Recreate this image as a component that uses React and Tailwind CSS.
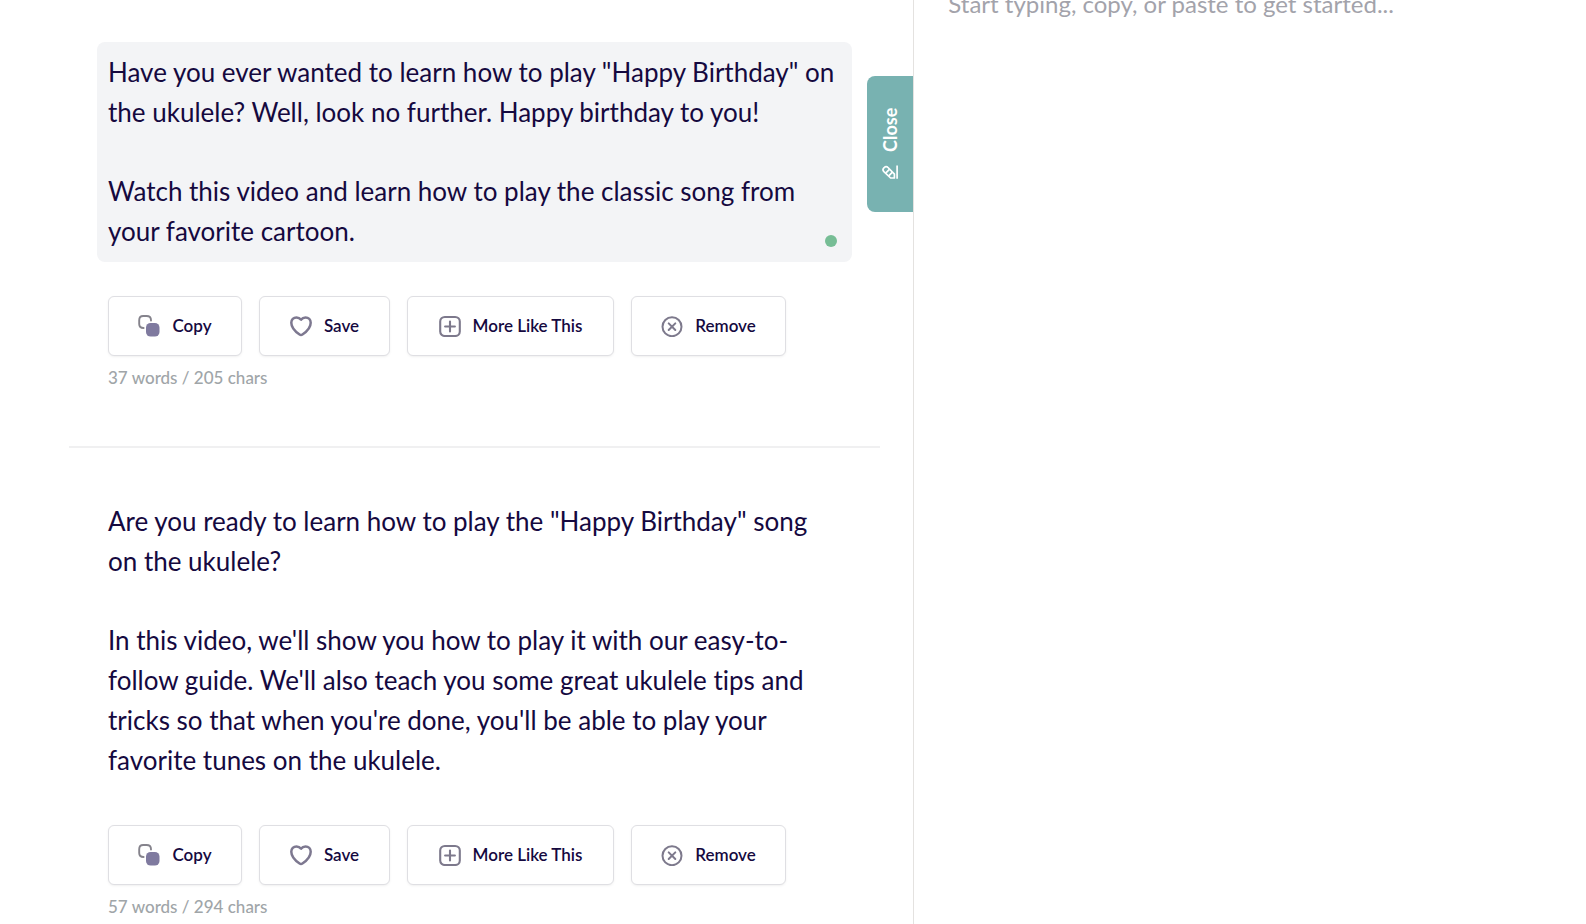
const results = [
  {
    id: 1,
    selected: true,
    paragraphs: [
      'Have you ever wanted to learn how to play "Happy Birthday" on the ukulele? Well, look no further. Happy birthday to you!',
      "Watch this video and learn how to play the classic song from your favorite cartoon.",
    ],
    words: 37,
    chars: 205,
  },
  {
    id: 2,
    selected: false,
    paragraphs: [
      'Are you ready to learn how to play the "Happy Birthday" song on the ukulele?',
      "In this video, we'll show you how to play it with our easy-to-follow guide. We'll also teach you some great ukulele tips and tricks so that when you're done, you'll be able to play your favorite tunes on the ukulele.",
    ],
    words: 57,
    chars: 294,
  },
];

function CopyIcon() {
  return (
    <svg width="22" height="22" viewBox="0 0 22 22" fill="none">
      <path
        d="M5.6 13C3 13 1.2 11.4 1.2 9V5.2C1.2 2.6 2.8 1 5.2 1H8.6C11.2 1 13 2.6 13 5.2V5.6"
        stroke="#85838c"
        strokeWidth="1.9"
        strokeLinecap="round"
      />
      <rect x="8" y="8" width="13.5" height="13.5" rx="4.6" fill="#7f7a9f" />
    </svg>
  );
}

function HeartIcon() {
  return (
    <svg width="22" height="22" viewBox="0 0 22 22" fill="none">
      <path
        d="M11 4.6C9.8 3.1 8.2 2.4 6.5 2.4C3.5 2.4 1.3 4.7 1.3 7.7C1.3 12.7 5.6 16.8 9.6 19.5C10.5 20.1 11.5 20.1 12.4 19.5C16.4 16.8 20.7 12.7 20.7 7.7C20.7 4.7 18.5 2.4 15.5 2.4C13.8 2.4 12.2 3.1 11 4.6Z"
        stroke="#7d7890"
        strokeWidth="2.5"
        strokeLinejoin="round"
      />
    </svg>
  );
}

function PlusIcon() {
  return (
    <svg width="22" height="22" viewBox="0 0 22 22" fill="none" stroke="#7d798c" strokeWidth="2.1">
      <rect x="1.2" y="2" width="19.6" height="19" rx="4.6" />
      <path d="M11 6.6V16.4M6.1 11.5H15.9" strokeLinecap="round" />
    </svg>
  );
}

function RemoveIcon() {
  return (
    <svg width="22" height="22" viewBox="0 0 22 22" fill="none" stroke="#7d798c" strokeWidth="2">
      <circle cx="11" cy="11.7" r="9.5" />
      <path d="M7.7 8.4L14.3 15M14.3 8.4L7.7 15" strokeLinecap="round" />
    </svg>
  );
}

function PencilIcon() {
  return (
    <svg
      className="rotate-90"
      width="16"
      height="16"
      viewBox="0 0 16 16"
      fill="none"
      stroke="currentColor"
      strokeWidth="1.7"
    >
      <path
        d="M2 12.4V8.6L8.4 1.9C9.5 0.8 11 0.8 12.1 1.9L12.5 2.3C13.6 3.4 13.6 4.9 12.5 6L5.8 12.4Z"
        strokeLinejoin="round"
      />
      <path d="M4.2 6.8L7.8 10.4M7.1 3.9L10.6 7.4" />
      <path d="M1.2 15.1H14.4" />
    </svg>
  );
}

const actions = [
  { label: "Copy", icon: CopyIcon, width: "w-[134px]" },
  { label: "Save", icon: HeartIcon, width: "w-[131px]" },
  { label: "More Like This", icon: PlusIcon, width: "w-[207px]" },
  { label: "Remove", icon: RemoveIcon, width: "w-[155px]" },
];

function Result({ result }) {
  return (
    <article>
      <div
        className={`${
          result.selected ? "bg-[#f3f4f6]" : ""
        } relative ml-7 mr-7 flex flex-col gap-[39px] rounded-lg pb-[11px] pl-[11px] pr-[13px] pt-[10px]`}
      >
        {result.paragraphs.map((text) => (
          <p key={text} className="text-[26px] leading-10 text-[#15093f]">
            {text}
          </p>
        ))}
        {result.selected && (
          <span className="absolute bottom-[15px] right-[15px] h-3 w-3 rounded-full bg-[#76bd95]" />
        )}
      </div>
      <div className="ml-[39px] mt-[34px] flex gap-[17px]">
        {actions.map(({ label, icon: Icon, width }) => (
          <button
            key={label}
            type="button"
            className={`${width} flex h-[60px] shrink-0 items-center justify-center gap-3 rounded-md border border-[#dfdfe3] bg-white text-[17px] font-semibold text-[#15093f] shadow-sm shadow-black/5`}
          >
            <Icon />
            {label}
          </button>
        ))}
      </div>
      <p className="ml-[39px] mt-2 text-[17px] leading-7 font-medium text-[#a0a5a8]">
        {result.words} words / {result.chars} chars
      </p>
    </article>
  );
}

export default function App() {
  return (
    <div className="flex min-h-screen overflow-hidden bg-white font-['Lato',sans-serif] [font-variant-ligatures:none]">
      <main className="relative w-[57.65%] shrink-0 border-r border-[#e4e2e0] pl-[69px] pr-[33px] pt-[42px]">
        <Result result={results[0]} />
        <hr className="mb-[43px] mt-[54px] border-t-2 border-[#f0f0f1]" />
        <Result result={results[1]} />
        <button
          type="button"
          className="absolute right-0 top-[76px] flex h-[136px] w-[46px] rotate-180 items-center justify-center gap-3 rounded-r-lg bg-[#78b2b1] text-[18px] font-bold text-white [writing-mode:vertical-rl]"
        >
          <PencilIcon />
          Close
        </button>
      </main>
      <textarea
        aria-label="Document"
        placeholder="Start typing, copy, or paste to get started..."
        className="-mt-3 flex-1 resize-none pl-[34px] text-[24px] leading-8 text-[#15093f] outline-none placeholder:text-[#a3a3ab]"
      />
    </div>
  );
}
